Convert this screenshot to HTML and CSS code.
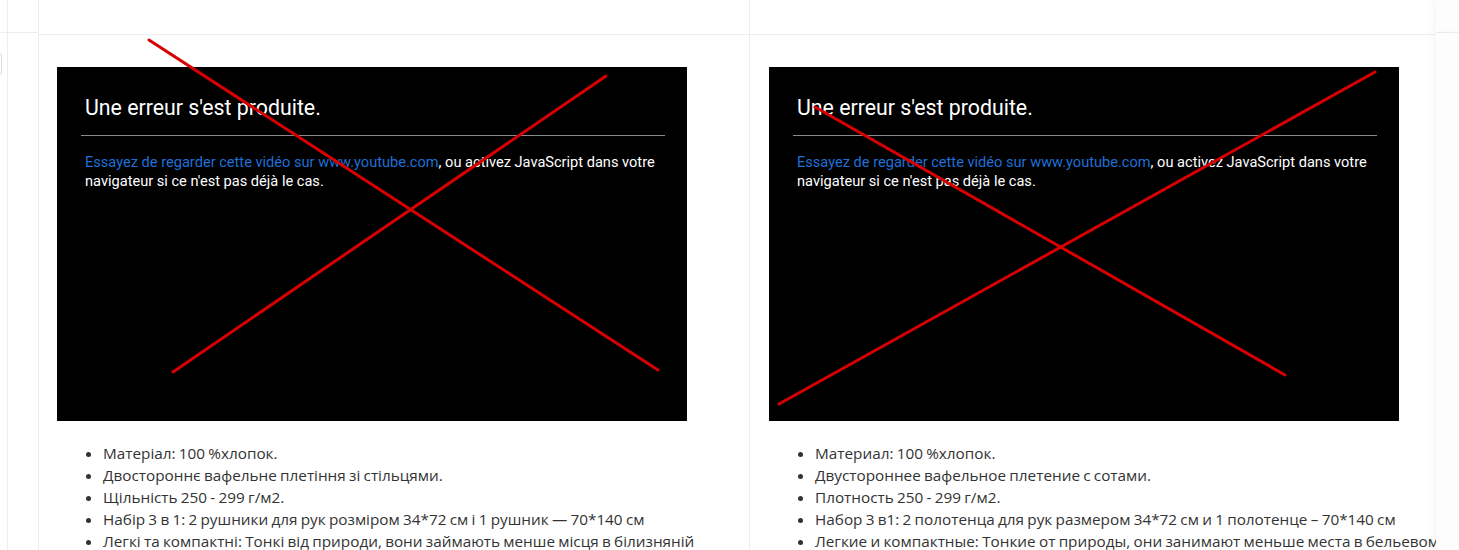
FILE: index.html
```html
<!DOCTYPE html>
<html lang="uk">
<head>
    <meta charset="UTF-8">
    <meta name="viewport" content="width=device-width, initial-scale=1.0">
    <title>Product description</title>
    <link rel="stylesheet" href="styles.css">
</head>
<body>
    <div class="sheet">
        <!-- header row -->
        <div class="cell gutter head"></div>
        <div class="cell handle head"></div>
        <div class="cell lang head"></div>
        <div class="cell lang head"></div>
        <div class="cell rail head"></div>

        <!-- content row -->
        <div class="cell gutter">
            <div class="stub"></div>
        </div>
        <div class="cell handle"></div>
        <div class="cell lang first">
            <div class="video">
                <div class="err">
                    <div class="err-title">Une erreur s'est produite.</div>
                    <hr class="err-line">
                    <div class="err-text"><a href="#">Essayez de regarder cette vidéo sur www.youtube.com</a>, ou activez JavaScript dans votre navigateur si ce n'est pas déjà le cas.</div>
                </div>
            </div>
            <ul class="specs">
                <li>Матеріал: 100 %хлопок.</li>
                <li>Двостороннє вафельне плетіння зі стільцями.</li>
                <li>Щільність 250 - 299 г/м2.</li>
                <li>Набір 3 в 1: 2 рушники для рук розміром 34*72 см і 1 рушник — 70*140 см</li>
                <li>Легкі та компактні: Тонкі від природи, вони займають менше місця в білизняній шафі.</li>
            </ul>
        </div>
        <div class="cell lang second">
            <div class="video">
                <div class="err">
                    <div class="err-title">Une erreur s'est produite.</div>
                    <hr class="err-line">
                    <div class="err-text"><a href="#">Essayez de regarder cette vidéo sur www.youtube.com</a>, ou activez JavaScript dans votre navigateur si ce n'est pas déjà le cas.</div>
                </div>
            </div>
            <ul class="specs">
                <li>Материал: 100 %хлопок.</li>
                <li>Двустороннее вафельное плетение с сотами.</li>
                <li>Плотность 250 - 299 г/м2.</li>
                <li>Набор 3 в1: 2 полотенца для рук размером 34*72 см и 1 полотенце – 70*140 см</li>
                <li>Легкие и компактные: Тонкие от природы, они занимают меньше места в бельевом шкафу.</li>
            </ul>
        </div>
        <div class="cell rail"></div>
    </div>

    <!-- strike-through marks drawn over the embeds -->
    <svg class="marks" width="1459" height="550" viewBox="0 0 1459 550">
        <line x1="149" y1="40" x2="658" y2="370"/>
        <line x1="606" y1="76" x2="173" y2="372"/>
        <line x1="1375" y1="72" x2="779" y2="404"/>
        <line x1="815" y1="107" x2="1285" y2="375"/>
    </svg>
</body>
</html>
```

FILE: styles.css
```css
* {
    margin: 0;
    padding: 0;
    box-sizing: border-box;
}

html, body {
    height: 100%;
    overflow: hidden;
}

body {
    font-family: "Open Sans", "Liberation Sans", sans-serif;
    background-color: #fff;
    color: #333;
}

.sheet {
    display: grid;
    grid-template-columns: 7px 31px 711px 687px 23px;
    grid-template-rows: 33px 1fr;
    height: 100%;
}

.cell {
    border-left: 1px solid #ededed;
    overflow: hidden;
}

.cell.head {
    border-bottom: 1px solid #ededed;
}

.gutter {
    border-left: none;
}

.rail {
    border-left: none;
    background-color: #fdfdfd;
    box-shadow: -4px 0 8px rgba(0, 0, 0, 0.035);
}

.stub {
    width: 22px;
    height: 24px;
    margin: 19px 0 0 -20px;
    border: 1px solid #dcdcdc;
    border-radius: 4px;
}

.lang {
    padding: 34px 18px 0 18px;
}

.lang.second {
    padding: 34px 0 0 19px;
}

.video {
    width: 630px;
    height: 354px;
    background-color: #000;
    color: #fff;
    font-family: Roboto, "Liberation Sans", sans-serif;
}

.err {
    padding: 29px 22px 0 24px;
}

.err-title {
    font-size: 21.3px;
    line-height: 24px;
    padding-left: 4px;
}

.err-line {
    border: none;
    border-top: 1px solid #8a8a8a;
    margin-top: 15px;
}

.err-text {
    font-size: 14.6px;
    line-height: 19px;
    padding: 0 0 0 4px;
    margin-top: 17px;
}

.err-text a {
    color: #1f6fd6;
    text-decoration: none;
}

.specs {
    margin-top: 21px;
    padding-left: 46px;
    font-size: 15.3px;
    line-height: 22px;
    word-spacing: -0.7px;
}

.second .specs {
    margin-right: -12px;
}

.marks {
    position: absolute;
    top: 0;
    left: 0;
    pointer-events: none;
}

.marks line {
    stroke: #d80000;
    stroke-width: 3;
    stroke-linecap: round;
}
```
